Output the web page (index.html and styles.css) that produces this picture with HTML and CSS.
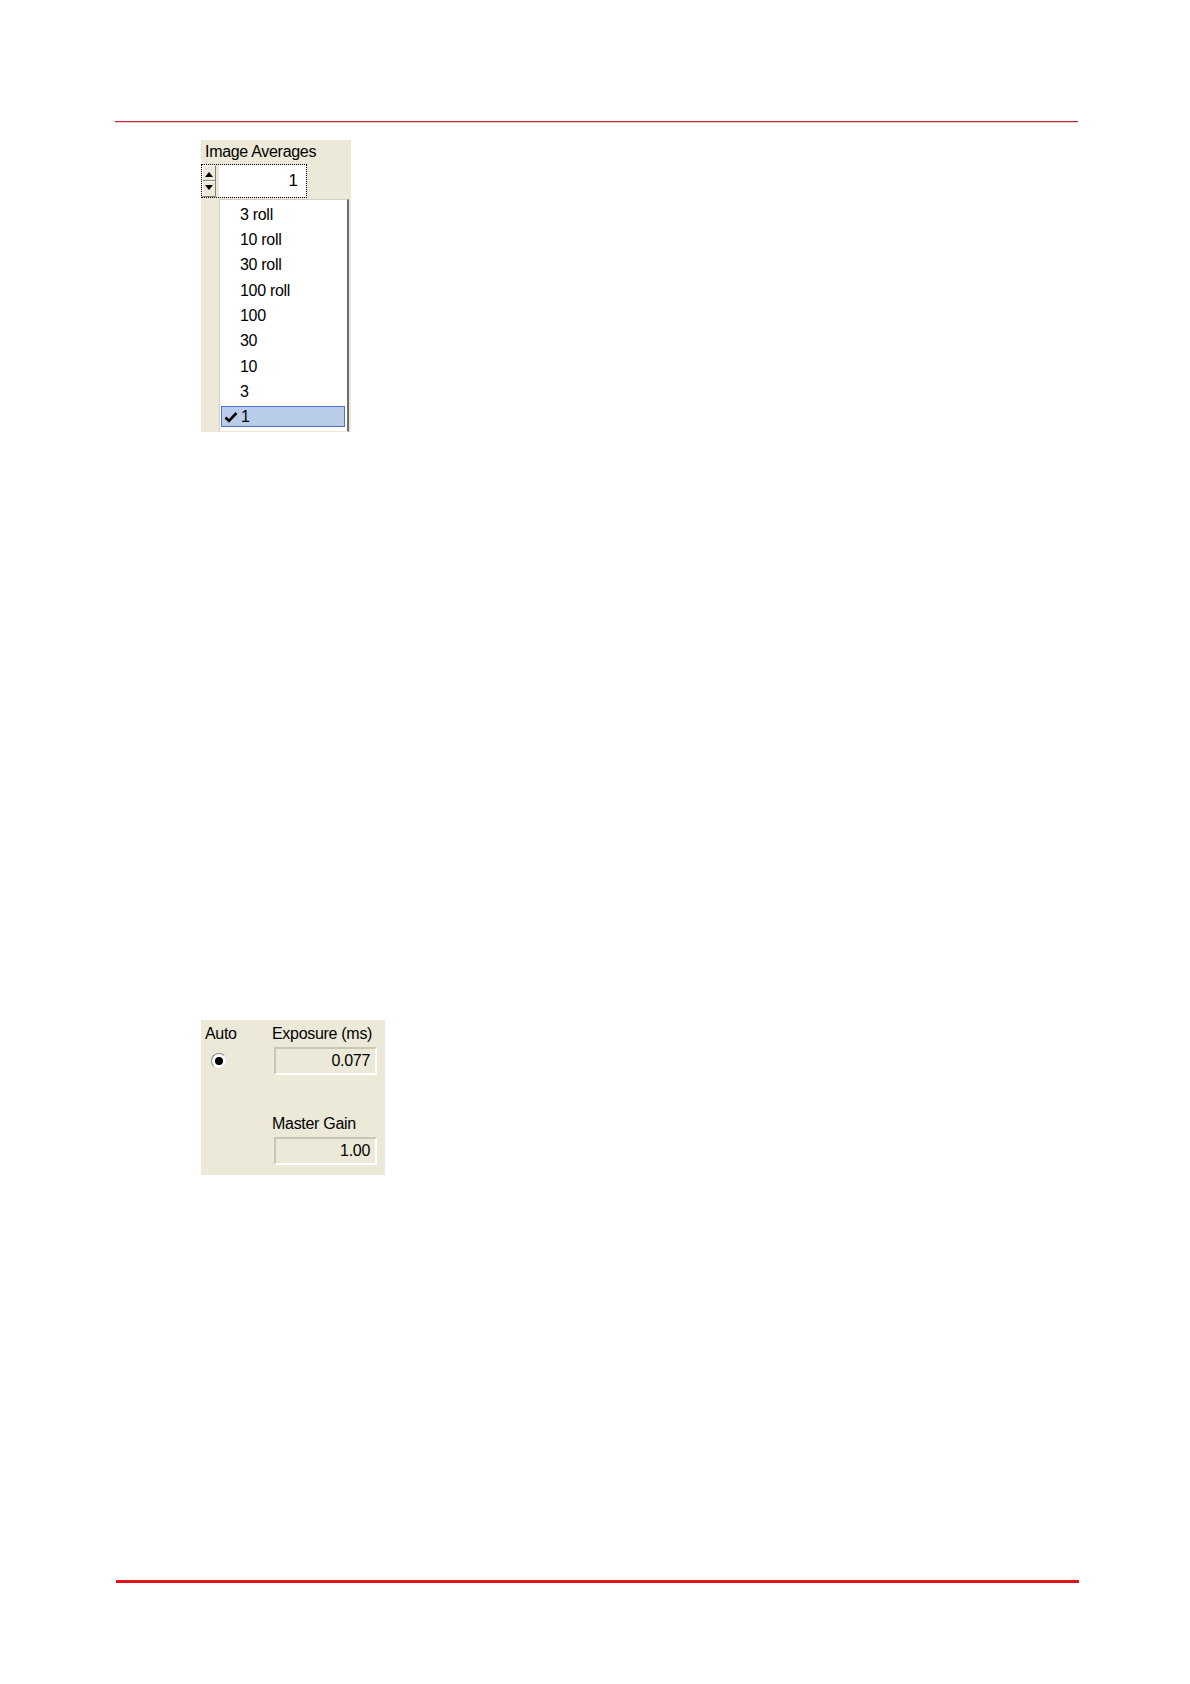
FILE: index.html
```html
<!DOCTYPE html>
<html>
<head>
<meta charset="utf-8">
<link rel="stylesheet" href="styles.css">
</head>
<body>
<div class="page">
  <div class="rule-top"></div>

  <div class="panel avg">
    <div class="label avg-label">Image Averages</div>
    <div class="spin-row">
      <div class="focus">
        <div class="spin">
          <svg width="14" height="32" viewBox="0 0 14 32">
            <rect x="0" y="0" width="14" height="32" fill="#ece9d8"/>
            <path d="M0.5 0.5H13.5M0.5 0.5V31.5" stroke="#ffffff" stroke-width="1" fill="none"/>
            <path d="M1 15.5H13" stroke="#808080" stroke-width="1"/>
            <path d="M1 16.5H13" stroke="#ffffff" stroke-width="1"/>
            <path d="M13.5 0.5V31.5M0.5 31.5H13.5" stroke="#808080" stroke-width="1" fill="none"/>
            <polygon points="3,12 11,12 7,7" fill="#000"/>
            <polygon points="3,20 11,20 7,25" fill="#000"/>
          </svg>
        </div>
        <div class="edit">1</div>
      </div>
    </div>
    <div class="list">
      <div class="item">3 roll</div>
      <div class="item">10 roll</div>
      <div class="item">30 roll</div>
      <div class="item">100 roll</div>
      <div class="item">100</div>
      <div class="item">30</div>
      <div class="item">10</div>
      <div class="item">3</div>
      <div class="item selected">
        <svg class="check" width="15" height="12" viewBox="0 0 15 12">
          <path d="M1.5 6.5L5 10L12.5 2" stroke="#000" stroke-width="2.6" fill="none"/>
        </svg>1</div>
    </div>
  </div>

  <div class="panel expo">
    <div class="col-auto">
      <div class="label">Auto</div>
      <div class="radio"><span class="dot"></span></div>
    </div>
    <div class="col-fields">
      <div class="label">Exposure (ms)</div>
      <div class="field">0.077</div>
      <div class="label gain-label">Master Gain</div>
      <div class="field">1.00</div>
    </div>
  </div>

  <div class="rule-bottom"></div>
</div>
</body>
</html>
```

FILE: styles.css
```css
html, body {
  margin: 0;
  padding: 0;
  background: #ffffff;
}

.page {
  width: 1190px;
  height: 1684px;
  display: flex;
  flex-direction: column;
  font-family: "Liberation Sans", Arial, sans-serif;
  font-size: 16px;
  color: #000;
}

.rule-top {
  margin: 121px 0 0 115px;
  width: 963px;
  height: 1px;
  background: #c8262c;
  border-bottom: 1px solid #f2c7c9;
}

.panel {
  background: #ece9d8;
  margin-left: 201px;
}

.label {
  line-height: 18px;
  white-space: nowrap;
  letter-spacing: -0.3px;
}

/* Image Averages panel */
.avg {
  margin-top: 17px;
  width: 150px;
  height: 292px;
  display: flex;
  flex-direction: column;
}

.avg-label {
  padding: 3px 0 0 4px;
}

.spin-row {
  margin-top: 2px;
  height: 36px;
}

.focus {
  width: 104px;
  height: 32px;
  border: 1px dotted #000;
  display: flex;
  margin-top: 1px;
}

.spin {
  width: 14px;
  height: 32px;
  margin-right: 3px;
}

.edit {
  flex: 1;
  background: #fff;
  text-align: right;
  padding-right: 8px;
  line-height: 32px;
  font-size: 17px;
}

.list {
  margin-left: 18px;
  width: 127px;
  height: 230px;
  background: #fff;
  border-top: 1px solid #d4d0c8;
  border-left: 1px solid #d4d0c8;
  border-right: 2px solid #6f6f6f;
  border-bottom: 1px solid #ece9d8;
  padding-top: 2px;
  display: flex;
  flex-direction: column;
}

.item {
  height: 25.3px;
  line-height: 25.3px;
  padding-left: 20px;
  letter-spacing: -0.3px;
  white-space: nowrap;
}

.item.selected {
  height: 21px;
  line-height: 21px;
  margin: 2px 0 0 1px;
  width: 124px;
  box-sizing: border-box;
  background: #b9cdeb;
  border: 1px solid #4f74c4;
  padding-left: 2px;
  display: flex;
  align-items: center;
}

.check {
  margin-right: 2px;
}

/* Exposure panel */
.expo {
  margin-top: 588px;
  width: 184px;
  height: 155px;
  display: flex;
  padding-top: 5px;
  box-sizing: border-box;
}

.col-auto {
  width: 71px;
  padding-left: 4px;
  box-sizing: border-box;
}

.radio {
  margin: 10px 0 0 6px;
  width: 14px;
  height: 14px;
  border-radius: 50%;
  background: #fff;
  border-top: 1px solid #8a8a8a;
  border-left: 1px solid #8a8a8a;
  border-right: 1px solid #e4e4e4;
  border-bottom: 1px solid #e4e4e4;
  display: flex;
  align-items: center;
  justify-content: center;
}

.dot {
  width: 8px;
  height: 8px;
  border-radius: 50%;
  background: #000;
}

.col-fields {
  display: flex;
  flex-direction: column;
}

.field {
  margin: 4px 0 0 2px;
  width: 103px;
  height: 28px;
  box-sizing: border-box;
  border-top: 2px solid #c9c6b4;
  border-left: 2px solid #c9c6b4;
  border-right: 2px solid #ffffff;
  border-bottom: 2px solid #ffffff;
  background: #ece9d8;
  text-align: right;
  padding-right: 5px;
  line-height: 24px;
  letter-spacing: -0.3px;
}

.gain-label {
  margin-top: 40px;
}

.rule-bottom {
  margin: 405px 0 0 116px;
  width: 963px;
  height: 3px;
  background: #e1141c;
}
```
